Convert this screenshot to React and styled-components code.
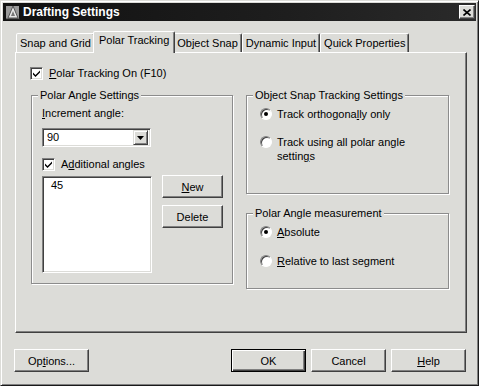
import React from 'react';
import styled, { createGlobalStyle } from 'styled-components';

const face = '#dcdcd8';
const shadow = '#808080';
const dark = '#404040';
const hilight = '#ffffff';

const GlobalStyle = createGlobalStyle`
  html, body {
    margin: 0;
    padding: 0;
    background: ${face};
  }
  body {
    font-family: "Liberation Sans", Arial, sans-serif;
    font-size: 11px;
    color: #000;
  }
  * {
    box-sizing: border-box;
  }
`;

const Window = styled.div`
  width: 479px;
  height: 386px;
  display: flex;
  flex-direction: column;
  background: ${face};
  border: 1px solid;
  border-color: ${face} #1a1a1a #1a1a1a ${face};
  box-shadow: inset 1px 1px ${hilight}, inset -1px -1px ${shadow};
  padding: 2px;
`;

const TitleBar = styled.div`
  height: 18px;
  display: flex;
  align-items: center;
  padding: 0 1px 0 2px;
  background: linear-gradient(90deg, #111 0%, #1e1e1e 60%, #2a2a2a 100%);
  color: #fff;
`;

const TitleText = styled.div`
  flex: 1;
  margin-left: 2px;
  font-weight: bold;
  font-size: 12px;
  line-height: 18px;
`;

const CloseButton = styled.div`
  width: 16px;
  height: 14px;
  display: flex;
  align-items: center;
  justify-content: center;
  background: ${face};
  border: 1px solid;
  border-color: ${hilight} ${dark} ${dark} ${hilight};
  box-shadow: inset -1px -1px ${shadow};
`;

const Body = styled.div`
  padding: 10px 10px 0 12px;
  display: flex;
  flex-direction: column;
`;

const TabStrip = styled.div`
  height: 21px;
  display: flex;
  align-items: flex-end;
  padding-left: 1px;
  position: relative;
  z-index: 1;
`;

const Tab = styled.div`
  height: ${p => (p.$active ? 22 : 19)}px;
  margin: 0 ${p => (p.$active ? -2 : 0)}px ${p => (p.$active ? -1 : 0)}px;
  padding: ${p => (p.$active ? '2px 5px 0' : '3px 3px 0')};
  line-height: 13px;
  white-space: nowrap;
  background: ${face};
  border: 1px solid;
  border-bottom: none;
  border-color: ${hilight} ${dark} transparent ${hilight};
  box-shadow: inset -1px 0 ${shadow};
  border-radius: 2px 2px 0 0;
  position: relative;
  z-index: ${p => (p.$active ? 2 : 1)};
`;

const Panel = styled.div`
  width: 452px;
  height: 281px;
  background: ${face};
  border: 1px solid;
  border-color: ${hilight} ${dark} ${dark} ${hilight};
  box-shadow: inset -1px -1px ${shadow};
  padding: 14px 16px 0 14px;
`;

const CheckRow = styled.label`
  display: flex;
  align-items: center;
  gap: 6px;
  line-height: 13px;
  margin-top: ${p => p.$top || 0}px;
`;

const CheckBox = styled.span`
  width: 13px;
  height: 13px;
  flex: none;
  display: flex;
  align-items: center;
  justify-content: center;
  background: #fff;
  border: 1px solid;
  border-color: ${shadow} ${hilight} ${hilight} ${shadow};
  box-shadow: inset 1px 1px ${dark}, inset -1px -1px ${face};
`;

const Columns = styled.div`
  display: grid;
  grid-template-columns: 202px 203px;
  column-gap: 13px;
  margin: 9px 0 0 1px;
  align-items: start;
`;

const RightColumn = styled.div`
  display: flex;
  flex-direction: column;
  gap: 13px;
`;

const Group = styled.fieldset`
  margin: 0;
  min-width: 0;
  height: ${p => p.$h}px;
  padding: 0;
  border: 1px solid #8c8c8c;
  box-shadow: 1px 1px 0 ${hilight}, inset 1px 1px 0 ${hilight};
`;

const Caption = styled.legend`
  margin-left: 6px;
  padding: 0 2px;
  line-height: 13px;
  background: ${face};
`;

const GroupBody = styled.div`
  padding-left: ${p => p.$pad}px;
`;

const FieldLabel = styled.div`
  line-height: 13px;
  margin-top: 5px;
`;

const Combo = styled.div`
  width: 109px;
  height: 19px;
  margin-top: 8px;
  display: flex;
  align-items: center;
  justify-content: space-between;
  padding: 2px;
  background: #fff;
  border: 1px solid;
  border-color: ${shadow} ${hilight} ${hilight} ${shadow};
  box-shadow: inset 1px 1px ${dark}, inset -1px -1px ${face};
`;

const ComboValue = styled.span`
  padding-left: 2px;
  line-height: 13px;
`;

const DropButton = styled.span`
  width: 15px;
  height: 15px;
  display: flex;
  align-items: center;
  justify-content: center;
  background: ${face};
  border: 1px solid;
  border-color: ${face} ${dark} ${dark} ${face};
  box-shadow: inset 1px 1px ${hilight}, inset -1px -1px ${shadow};
`;

const ListRow = styled.div`
  display: flex;
  align-items: flex-start;
  gap: 10px;
  margin-top: 5px;
`;

const ListBox = styled.div`
  width: 110px;
  height: 97px;
  padding: 2px 8px;
  line-height: 13px;
  background: #fff;
  border: 1px solid;
  border-color: ${shadow} ${hilight} ${hilight} ${shadow};
  box-shadow: inset 1px 1px ${dark}, inset -1px -1px ${face};
`;

const ButtonStack = styled.div`
  display: flex;
  flex-direction: column;
  gap: 7px;
  margin-top: -1px;
`;

const Button = styled.button`
  width: ${p => p.$w || 75}px;
  height: 23px;
  padding: 0;
  font: inherit;
  font-size: 11px;
  color: #000;
  background: ${face};
  border: 1px solid;
  border-color: ${p => (p.$default ? '#000' : `${hilight} ${dark} ${dark} ${hilight}`)};
  box-shadow: ${p =>
    p.$default
      ? `inset 1px 1px ${hilight}, inset -1px -1px ${dark}, inset -2px -2px ${shadow}`
      : `inset -1px -1px ${shadow}`};
`;

const RadioRow = styled.label`
  display: flex;
  align-items: flex-start;
  gap: 5px;
  line-height: 14px;
  margin-top: ${p => p.$top}px;
`;

const Radio = styled.span`
  width: 12px;
  height: 12px;
  flex: none;
  margin-top: 1px;
  border-radius: 50%;
  background: #fff;
  border: 1px solid;
  border-color: ${shadow} ${hilight} ${hilight} ${shadow};
  box-shadow: inset 1px 1px ${dark};
  display: flex;
  align-items: center;
  justify-content: center;

  &::after {
    content: '';
    width: 4px;
    height: 4px;
    border-radius: 50%;
    background: #000;
    display: ${p => (p.$checked ? 'block' : 'none')};
  }
`;

const Footer = styled.div`
  display: flex;
  justify-content: space-between;
  margin: 16px 0 0 -1px;
`;

const FooterRight = styled.div`
  display: flex;
  gap: 5px;
`;

const Key = styled.span`
  text-decoration: underline;
`;

function AppIcon() {
  return (
    <svg width="16" height="16" viewBox="0 0 16 16">
      <rect x="1" y="2" width="13" height="13" fill="#9a9a9a" />
      <polygon points="3,14 8,2 13,14" fill="#e8e8e8" stroke="#555" strokeWidth="1" />
      <polygon points="6,12 8,7 10,12" fill="#777" />
      <line x1="1" y1="15" x2="15" y2="15" stroke="#333" />
    </svg>
  );
}

function CloseGlyph() {
  return (
    <svg width="8" height="7" viewBox="0 0 8 7">
      <path d="M0.5 0.5 L7.5 6.5 M7.5 0.5 L0.5 6.5" stroke="#000" strokeWidth="1.6" />
    </svg>
  );
}

function Check() {
  return (
    <svg width="7" height="7" viewBox="0 0 7 7">
      <path d="M0 2.5 L2.5 5 L7 0.5 L7 2.5 L2.5 7 L0 4.5 Z" fill="#000" />
    </svg>
  );
}

function ArrowDown() {
  return (
    <svg width="7" height="4" viewBox="0 0 7 4">
      <polygon points="0,0 7,0 3.5,4" fill="#000" />
    </svg>
  );
}

const tabs = ['Snap and Grid', 'Polar Tracking', 'Object Snap', 'Dynamic Input', 'Quick Properties'];

export default function App() {
  return (
    <>
      <GlobalStyle />
      <Window>
        <TitleBar>
          <AppIcon />
          <TitleText>Drafting Settings</TitleText>
          <CloseButton>
            <CloseGlyph />
          </CloseButton>
        </TitleBar>
        <Body>
          <TabStrip>
            {tabs.map(t => (
              <Tab key={t} $active={t === 'Polar Tracking'}>{t}</Tab>
            ))}
          </TabStrip>
          <Panel>
            <CheckRow>
              <CheckBox><Check /></CheckBox>
              <span><Key>P</Key>olar Tracking On (F10)</span>
            </CheckRow>
            <Columns>
              <Group $h={195}>
                <Caption>Polar Angle Settings</Caption>
                <GroupBody $pad={10}>
                  <FieldLabel><Key>I</Key>ncrement angle:</FieldLabel>
                  <Combo>
                    <ComboValue>90</ComboValue>
                    <DropButton><ArrowDown /></DropButton>
                  </Combo>
                  <CheckRow $top={11}>
                    <CheckBox><Check /></CheckBox>
                    <span>A<Key>d</Key>ditional angles</span>
                  </CheckRow>
                  <ListRow>
                    <ListBox>45</ListBox>
                    <ButtonStack>
                      <Button $w={61}><Key>N</Key>ew</Button>
                      <Button $w={61}>Delete</Button>
                    </ButtonStack>
                  </ListRow>
                </GroupBody>
              </Group>
              <RightColumn>
                <Group $h={105}>
                  <Caption>Object Snap Tracking Settings</Caption>
                  <GroupBody $pad={13}>
                    <RadioRow $top={5}>
                      <Radio $checked />
                      <span>Track orthogona<Key>l</Key>ly only</span>
                    </RadioRow>
                    <RadioRow $top={14}>
                      <Radio />
                      <span>Track using all polar angle<br />settin<Key>g</Key>s</span>
                    </RadioRow>
                  </GroupBody>
                </Group>
                <Group $h={82}>
                  <Caption>Polar Angle measurement</Caption>
                  <GroupBody $pad={13}>
                    <RadioRow $top={5}>
                      <Radio $checked />
                      <span><Key>A</Key>bsolute</span>
                    </RadioRow>
                    <RadioRow $top={15}>
                      <Radio />
                      <span><Key>R</Key>elative to last segment</span>
                    </RadioRow>
                  </GroupBody>
                </Group>
              </RightColumn>
            </Columns>
          </Panel>
          <Footer>
            <Button>Op<Key>t</Key>ions...</Button>
            <FooterRight>
              <Button $default>OK</Button>
              <Button>Cancel</Button>
              <Button><Key>H</Key>elp</Button>
            </FooterRight>
          </Footer>
        </Body>
      </Window>
    </>
  );
}
